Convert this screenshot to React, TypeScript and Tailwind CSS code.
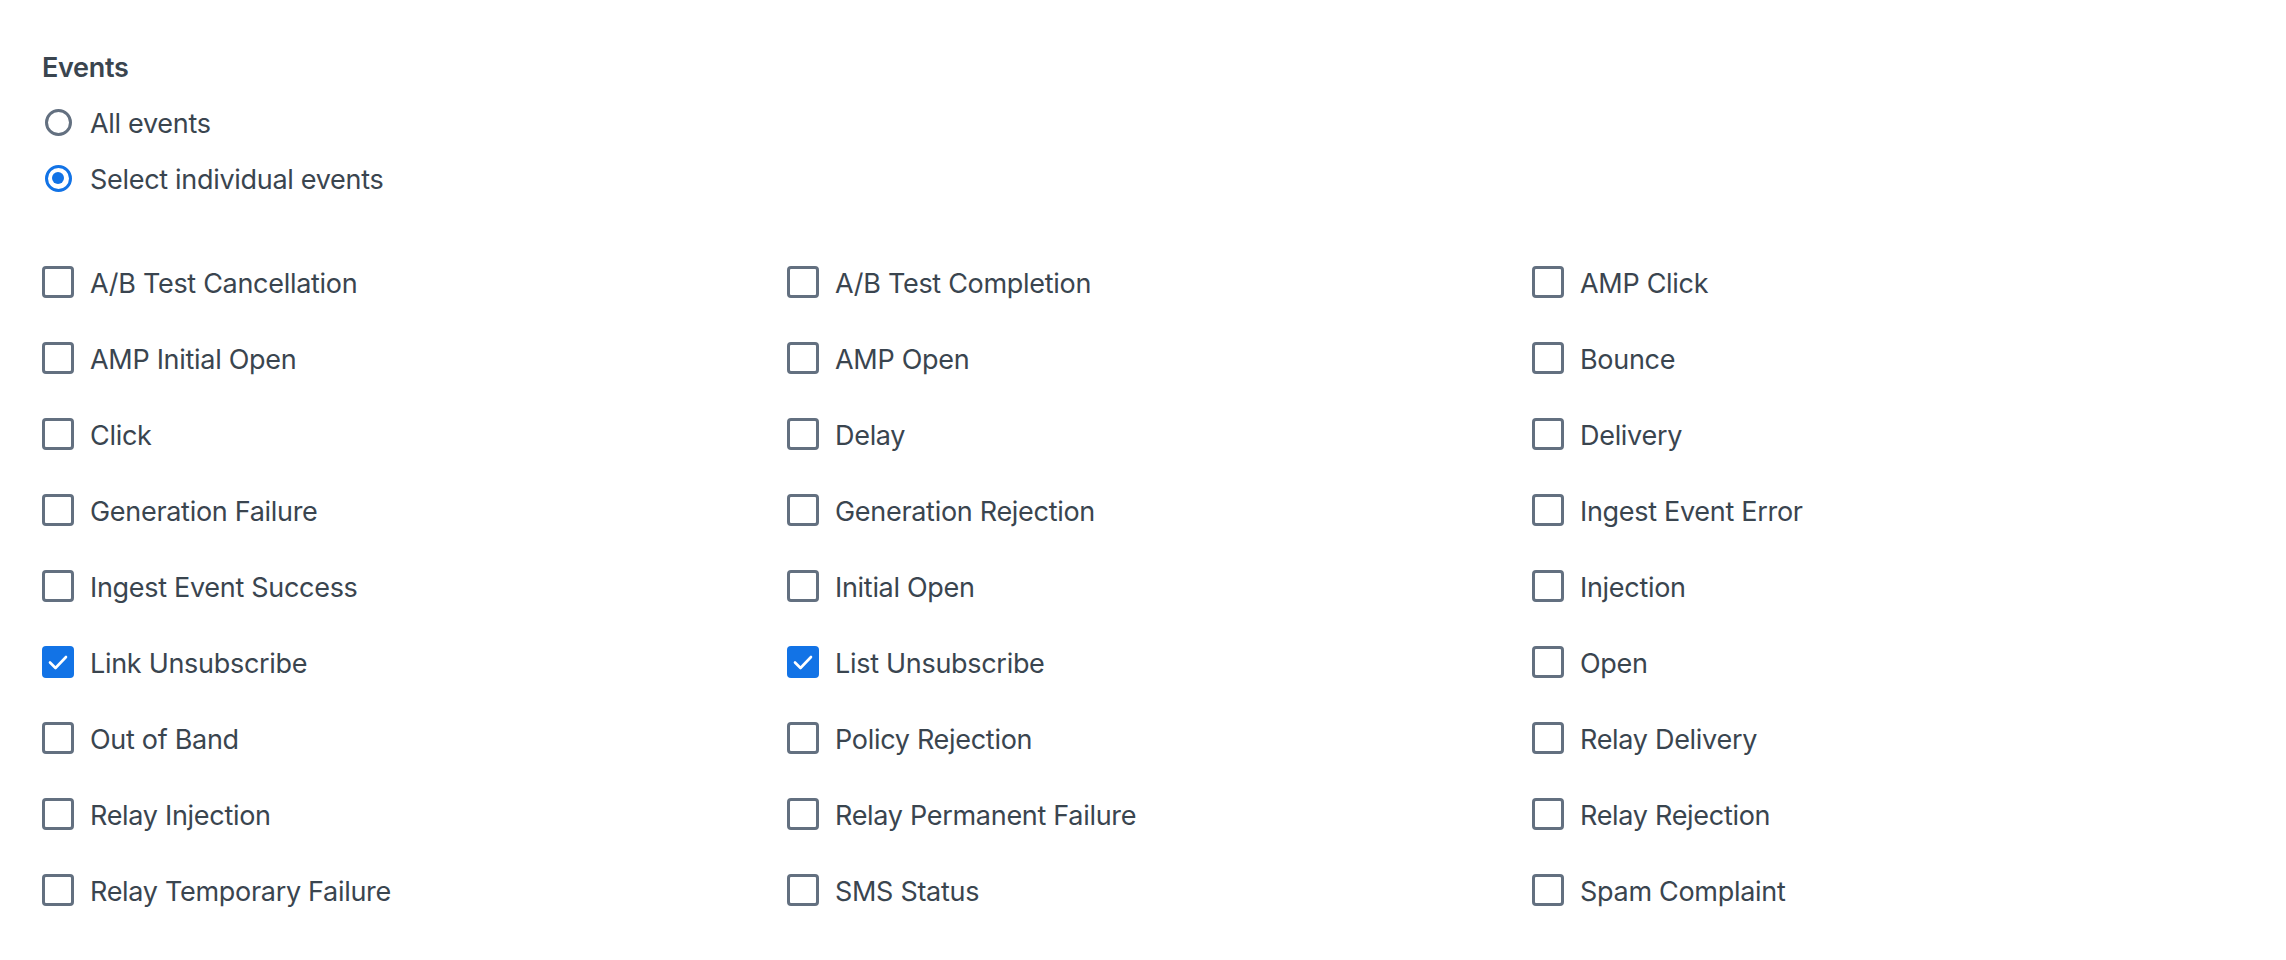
import { useState } from "react";

const EVENTS = [
  "A/B Test Cancellation", "A/B Test Completion", "AMP Click",
  "AMP Initial Open", "AMP Open", "Bounce",
  "Click", "Delay", "Delivery",
  "Generation Failure", "Generation Rejection", "Ingest Event Error",
  "Ingest Event Success", "Initial Open", "Injection",
  "Link Unsubscribe", "List Unsubscribe", "Open",
  "Out of Band", "Policy Rejection", "Relay Delivery",
  "Relay Injection", "Relay Permanent Failure", "Relay Rejection",
  "Relay Temporary Failure", "SMS Status", "Spam Complaint",
]

const Radio = ({ label, checked, onClick }: { label: string, checked: boolean, onClick: () => void }) => {
  return (
    <div className="flex flex-row items-center h-[56px] cursor-pointer" onClick={onClick}>
      <div className="w-[32px] h-[32px] flex items-center justify-center">
        {
          checked
          ?
            <div className="w-[27px] h-[27px] rounded-full border-[3px] border-[#1273e6] flex items-center justify-center">
              <div className="w-[12px] h-[12px] rounded-full bg-[#1273e6]" />
            </div>
          :
            <div className="w-[27px] h-[27px] rounded-full border-[3px] border-[#637080]" />
        }
      </div>
      <span className="ml-[16px] mt-[4px] leading-[40px]">{label}</span>
    </div>
  )
}

const Check = ({ label, checked, onClick }: { label: string, checked: boolean, onClick: () => void }) => {
  return (
    <div className="flex flex-row items-center h-[76px] cursor-pointer" onClick={onClick}>
      {
        checked
        ?
          <div className="w-[32px] h-[32px] rounded-[4px] bg-[#1273e6] flex items-center justify-center">
            <svg width="22" height="22" viewBox="0 0 22 22" fill="none">
              <path d="M3 11.5 L8.5 17 L19 6" stroke="white" strokeWidth="2.6" strokeLinecap="round" strokeLinejoin="round" />
            </svg>
          </div>
        :
          <div className="w-[32px] h-[32px] rounded-[4px] border-[3px] border-[#637080] bg-white" />
      }
      <span className="ml-[16px] mt-[4px] leading-[40px]">{label}</span>
    </div>
  )
}

export default function App() {
  const [all, setAll] = useState<boolean>(false)
  const [checked, setChecked] = useState<string[]>(["Link Unsubscribe", "List Unsubscribe"])
  const toggle = (name: string) =>
    setChecked(prev => prev.includes(name) ? prev.filter(n => n !== name) : [...prev, name])

  return (
    <div className="w-[2286px] h-[960px] bg-white pl-[42px] pt-[48px] text-[27px] tracking-[-0.3px] text-[#3a454f] font-['Inter',sans-serif]">
      <div className="font-semibold leading-[40px] mb-[6px]">Events</div>
      <Radio label="All events" checked={all} onClick={() => setAll(true)} />
      <Radio label="Select individual events" checked={!all} onClick={() => setAll(false)} />
      <div className="grid grid-cols-[repeat(3,745px)] mt-[38px]">
        {EVENTS.map((name) => (
          <Check key={name} label={name} checked={checked.includes(name)} onClick={() => toggle(name)} />
        ))}
      </div>
    </div>
  )
}
